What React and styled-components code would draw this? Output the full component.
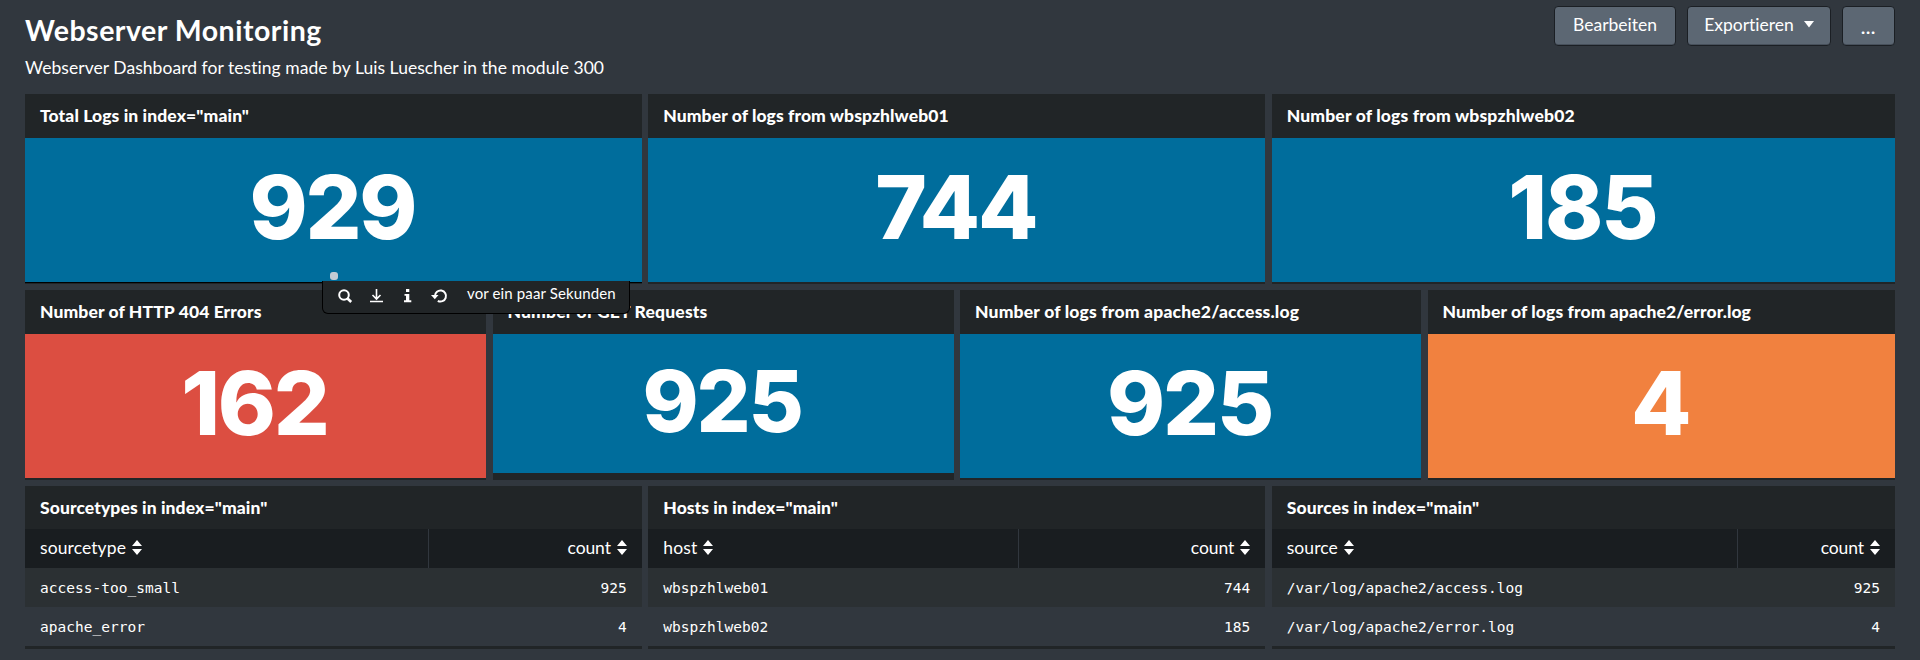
import React from 'react';
import styled, { createGlobalStyle } from 'styled-components';

const Global = createGlobalStyle`
  * { box-sizing: border-box; }
  html, body { margin: 0; padding: 0; background: #31373e; }
  body {
    height: 660px;
    overflow: hidden;
    font-family: Lato, "Liberation Sans", sans-serif;
    font-size: 17.5px;
    font-variant-ligatures: none;
    color: #fff;
  }
`;

const Page = styled.main`
  height: 660px;
  padding: 6px 25px 0;
  background: #31373e;
`;

const Header = styled.header`
  display: flex;
  justify-content: space-between;
  align-items: flex-start;
  height: 88px;
`;

const Title = styled.h1`
  margin: 0;
  padding-top: 5px;
  font-size: 28.5px;
  line-height: 38px;
  font-weight: 700;
  white-space: nowrap;
  letter-spacing: 0.5px;
`;

const Description = styled.p`
  margin: 6px 0 0;
  font-size: 17.5px;
  line-height: 25px;
  white-space: nowrap;
  letter-spacing: 0.045px;
`;

const Actions = styled.div`
  display: flex;
  gap: 11px;
`;

const Button = styled.button`
  display: flex;
  align-items: center;
  justify-content: center;
  gap: 10px;
  width: ${(p) => p.$width}px;
  height: 40px;
  padding: ${(p) => (p.$strong ? '2px 0 0' : '0 0 3px')};
  border: 1px solid #1b1f24;
  border-radius: 4px;
  background: #5c6773;
  box-shadow: inset 0 -1px 0 #47505b;
  color: #fff;
  font: ${(p) => (p.$strong ? 700 : 400)} 17.5px Lato, sans-serif;
  font-variant-ligatures: none;
  letter-spacing: ${(p) => (p.$strong ? 0.8 : 0)}px;
`;

const Rows = styled.div`
  display: flex;
  flex-direction: column;
  gap: 6px;
`;

const Row = styled.section`
  display: grid;
  grid-template-columns: repeat(${(p) => p.$columns}, 1fr);
  height: ${(p) => p.$height}px;
`;

const Cell = styled.div`
  position: relative;
  padding-right: 6.5px;
  min-width: 0;
  &:last-child { padding-right: 0; }
`;

const Panel = styled.article`
  height: 100%;
  background: #212527;
`;

const PanelTitle = styled.h2`
  margin: 0;
  height: ${(p) => p.$height || 44}px;
  padding: 0 15px;
  font-size: 17.5px;
  line-height: 44px;
  font-weight: 900;
  white-space: nowrap;
  letter-spacing: ${(p) => p.$spacing || 0.1}px;
`;

const Value = styled.div`
  display: flex;
  align-items: center;
  justify-content: center;
  height: ${(p) => p.$height || 144}px;
  padding-right: 2px;
  padding-bottom: ${(p) => (p.$height ? 5 : 7)}px;
  background: ${(p) => p.$color};
  font-family: Inter, sans-serif;
  font-weight: 800;
  font-size: ${(p) => p.$size || 88}px;
  line-height: 1;
  letter-spacing: -2.2px;
`;

const HoverLine = styled.div`
  height: 1px;
  background: #000;
`;

const Toolbar = styled.div`
  position: absolute;
  z-index: 2;
  top: 187px;
  left: 297px;
  display: flex;
  align-items: flex-start;
  width: 308px;
  height: 33px;
  padding: 8px 0 0 15px;
  border: 1px solid #000;
  border-top: 0;
  border-radius: 0 0 6px 6px;
  background: #212527;
  svg { display: block; flex: none; margin-right: 15px; }
`;

const ToolbarTime = styled.span`
  margin-left: 4px;
  margin-top: -6px;
  font-size: 15px;
  line-height: 20px;
  white-space: nowrap;
  letter-spacing: 0.13px;
`;

const ProgressDot = styled.span`
  position: absolute;
  z-index: 2;
  top: 178px;
  left: 305px;
  width: 8px;
  height: 8px;
  border-radius: 3px;
  background: #c3cbd4;
`;

const Table = styled.table`
  width: 100%;
  table-layout: fixed;
  border-collapse: separate;
  border-spacing: 0;
`;

const HeadCell = styled.th`
  height: 39px;
  width: ${(p) => (p.$width ? `${p.$width}px` : 'auto')};
  padding: 0 15px 2px;
  background: #191d20;
  border-right: ${(p) => (p.$width ? '1px solid #31373e' : '0')};
  font-size: 17.5px;
  font-weight: 400;
  line-height: 20px;
  text-align: ${(p) => (p.$right ? 'right' : 'left')};
  white-space: nowrap;
  letter-spacing: ${(p) => (p.$right ? -0.1 : 0.1)}px;
  svg { margin-left: 6px; vertical-align: -1px; }
`;

const BodyRow = styled.tr`
  background: ${(p) => (p.$odd ? '#2b3033' : '#31373e')};
`;

const DataCell = styled.td`
  height: 39px;
  padding: 0 15px;
  font-family: "DejaVu Sans Mono", monospace;
  font-size: 14.5px;
  line-height: 20px;
  letter-spacing: 0.02px;
  text-align: ${(p) => (p.$right ? 'right' : 'left')};
`;

const SortIcon = () => (
  <svg width="10" height="15" viewBox="0 0 10 15" fill="#fff">
    <path d="M5 0 10 6H0zM5 15 0 9H10z" />
  </svg>
);

const Caret = () => (
  <svg width="10" height="7" viewBox="0 0 10 7" fill="#fff">
    <path d="M0 0H10L5 6.5z" />
  </svg>
);

const SearchIcon = () => (
  <svg width="16" height="15" viewBox="0 0 16 15" fill="none" stroke="#fff" strokeWidth="2">
    <circle cx="6" cy="6" r="4.8" />
    <path d="M9 9 13.2 13" strokeWidth="2.6" />
  </svg>
);

const DownloadIcon = () => (
  <svg width="16" height="15" viewBox="0 0 16 15" fill="none" stroke="#fff" strokeWidth="1.6">
    <path d="M7.5 0V10M3.5 6 7.5 10 11.5 6M1 12.5H14" />
  </svg>
);

const InfoIcon = () => (
  <svg width="16" height="15" viewBox="0 0 16 15" fill="#fff">
    <path d="M6 0H9.3V3H6zM4.5 5H9.3V11.3H11.3V13.2H4V11.3H6V6.8H4.5z" />
  </svg>
);

const RefreshIcon = () => (
  <svg width="17" height="15" viewBox="0 0 17 15" fill="none" stroke="#fff" strokeWidth="2">
    <path d="M4 7A5.5 5.5 0 1 1 6.8 11.8" />
    <path d="M0 6H7.5L3.8 10.2z" fill="#fff" stroke="none" />
  </svg>
);

const BLUE = '#006d9c';

const metrics = [
  [
    { title: 'Total Logs in index="main"', value: '929', color: BLUE, hovered: true },
    { title: 'Number of logs from wbspzhlweb01', value: '744', color: BLUE, spacing: 0.08 },
    { title: 'Number of logs from wbspzhlweb02', value: '185', color: BLUE, spacing: 0.17 },
  ],
  [
    { title: 'Number of HTTP 404 Errors', value: '162', color: '#dc4e41' },
    { title: 'Number of GET Requests', value: '925', color: BLUE, height: 139, size: 85, spacing: 0.17 },
    { title: 'Number of logs from apache2/access.log', value: '925', color: BLUE, spacing: 0.19 },
    { title: 'Number of logs from apache2/error.log', value: '4', color: '#f1813f' },
  ],
];

const tables = [
  { title: 'Sourcetypes in index="main"', field: 'sourcetype', width: 404, rows: [['access-too_small', 925], ['apache_error', 4]] },
  { title: 'Hosts in index="main"', spacing: 0.05, field: 'host', width: 371, rows: [['wbspzhlweb01', 744], ['wbspzhlweb02', 185]] },
  { title: 'Sources in index="main"', spacing: 0.13, field: 'source', width: 466, rows: [['/var/log/apache2/access.log', 925], ['/var/log/apache2/error.log', 4]] },
];

const Metric = ({ item }) => (
  <Cell>
    <Panel>
      <PanelTitle $spacing={item.spacing}>{item.title}</PanelTitle>
      <Value $color={item.color} $height={item.height} $size={item.size}>{item.value}</Value>
      {item.hovered && <HoverLine />}
    </Panel>
    {item.hovered && (
      <>
        <ProgressDot />
        <Toolbar>
          <SearchIcon />
          <DownloadIcon />
          <InfoIcon />
          <RefreshIcon />
          <ToolbarTime>vor ein paar Sekunden</ToolbarTime>
        </Toolbar>
      </>
    )}
  </Cell>
);

const TablePanel = ({ table }) => (
  <Cell>
    <Panel>
      <PanelTitle $height={43} $spacing={table.spacing}>{table.title}</PanelTitle>
      <Table>
        <thead>
          <tr>
            <HeadCell $width={table.width}>{table.field}<SortIcon /></HeadCell>
            <HeadCell $right>count<SortIcon /></HeadCell>
          </tr>
        </thead>
        <tbody>
          {table.rows.map(([name, count], i) => (
            <BodyRow key={name} $odd={i % 2 === 0}>
              <DataCell>{name}</DataCell>
              <DataCell $right>{count}</DataCell>
            </BodyRow>
          ))}
        </tbody>
      </Table>
    </Panel>
  </Cell>
);

export default function App() {
  return (
    <Page>
      <Global />
      <Header>
        <div>
          <Title>Webserver Monitoring</Title>
          <Description>Webserver Dashboard for testing made by Luis Luescher in the module 300</Description>
        </div>
        <Actions>
          <Button $width={122}>Bearbeiten</Button>
          <Button $width={144}>Exportieren<Caret /></Button>
          <Button $width={53} $strong>...</Button>
        </Actions>
      </Header>
      <Rows>
        {metrics.map((row, i) => (
          <Row key={i} $columns={row.length} $height={190}>
            {row.map((item) => <Metric key={item.title} item={item} />)}
          </Row>
        ))}
        <Row $columns={3} $height={163}>
          {tables.map((t) => <TablePanel key={t.title} table={t} />)}
        </Row>
      </Rows>
    </Page>
  );
}
